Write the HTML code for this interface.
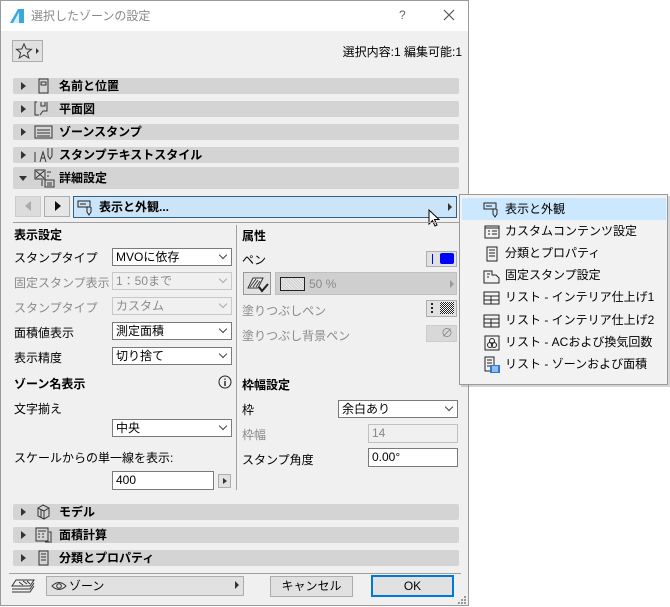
<!DOCTYPE html>
<html><head><meta charset="utf-8"><style>
*{margin:0;padding:0;box-sizing:border-box}
body{width:670px;height:607px;background:#fff;font-family:"Liberation Sans","Noto Sans CJK JP",sans-serif;font-size:12px;color:#000;position:relative;overflow:hidden}
.a{position:absolute}
.dlg{left:0;top:0;width:469px;height:606px;border:1px solid #9a9a9a;background:#f0f0f0}
.title{left:1px;top:1px;width:467px;height:30px;background:#fff}
.bar{position:absolute;left:13px;width:446px;height:16px;background:#d4d4d4;border-radius:2px}
.bar .t{position:absolute;left:8px;top:4px;width:0;height:0;border-left:5px solid #333;border-top:4px solid transparent;border-bottom:4px solid transparent}
.bar .l{position:absolute;left:46px;top:0;font-weight:bold;line-height:16px;font-size:12px}
.bar svg{position:absolute;left:20px;top:0}
.lbl{position:absolute;font-size:12px;line-height:14px}
.dis{color:#8a8a8a}
.b{font-weight:bold}
.sel{position:absolute;background:#fff;border:1px solid #7a7a7a;height:18px;padding-left:3px;line-height:16px;font-size:12px}
.sel.d{background:#f0f0f0;border-color:#c8c8c8;color:#8a8a8a}
.sel .ch{position:absolute;right:5px;top:3px;width:6px;height:6px;border-right:1px solid #444;border-bottom:1px solid #444;transform:rotate(45deg)}
.sel.d .ch{border-color:#aaa}
.inp{position:absolute;background:#fff;border:1px solid #7a7a7a;height:19px;padding-left:3px;line-height:17px}
.btn{position:absolute;background:#e1e1e1;border:1px solid #adadad}
.mi{position:absolute;left:505px;font-size:12px;line-height:14px}
.mic{position:absolute;left:483px}
</style></head><body>
<div class="a dlg"></div>
<div class="a title"></div>
<svg class="a" style="left:9px;top:8px" width="16" height="16"><path d="M1 15 L9 1 L15 1 L15 15Z" fill="#39a7e0"/><path d="M4 15 L10 4 L10 15Z" fill="#fff" opacity=".8"/></svg>
<div class="lbl" style="left:31px;top:9px;color:#888;font-size:12px">選択したゾーンの設定</div>
<div class="lbl" style="left:399px;top:8px;color:#666">?</div>
<svg class="a" style="left:443px;top:9px" width="12" height="12"><path d="M1 1L11 11M11 1L1 11" stroke="#555" stroke-width="1.2"/></svg>

<div class="btn" style="left:12px;top:40px;width:31px;height:22px"></div>
<svg class="a" style="left:15px;top:42px" width="26" height="18"><path d="M9 2 L11.2 7 L16.5 7.3 L12.4 10.7 L13.8 16 L9 13 L4.2 16 L5.6 10.7 L1.5 7.3 L6.8 7Z" fill="none" stroke="#333"/><path d="M21 6 L24 9 L21 12Z" fill="#333"/></svg>
<div class="lbl" style="right:208px;top:45px">選択内容:1 編集可能:1</div>

<div class="bar" style="top:78px"><i class="t"></i><svg width="20" height="16"><rect x="6" y="1" width="9" height="14" fill="none" stroke="#333"/><path d="M8 4h5v3h-5z" fill="none" stroke="#333"/></svg><span class="l">名前と位置</span></div>
<div class="bar" style="top:101px"><i class="t"></i><svg width="22" height="16"><path d="M4 1H2V14H6M8 1v4h4V1M14 1v9h-4l-3 4" fill="none" stroke="#333"/></svg><span class="l">平面図</span></div>
<div class="bar" style="top:124px"><i class="t"></i><svg width="22" height="16"><rect x="2" y="2" width="17" height="12" fill="none" stroke="#333"/><path d="M4 6h13M4 9h13M4 12h13" stroke="#333"/></svg><span class="l">ゾーンスタンプ</span></div>
<div class="bar" style="top:147px"><i class="t"></i><svg width="24" height="16"><path d="M2 5v10M7 15L10 5L13 15M8 11h4M15 1v8l2 3 2-3V1" fill="none" stroke="#333"/></svg><span class="l">スタンプテキストスタイル</span></div>
<div class="bar" style="top:167px;height:22px"><i class="t" style="top:9px;left:6px;border-left:4px solid transparent;border-right:4px solid transparent;border-top:5px solid #333;border-bottom:0"></i><svg width="24" height="22"><rect x="2" y="3" width="10" height="9" fill="none" stroke="#333"/><path d="M3 4l8 7M11 4l-8 7M14 5h4M14 9h2M9 13v6M12 13h9v7h-9z" fill="none" stroke="#333"/><path d="M14 16h5M14 18h5" stroke="#333"/></svg><span class="l" style="line-height:22px">詳細設定</span></div>

<div class="btn" style="left:15px;top:196px;width:26px;height:21px;background:#dcdcdc;border-color:#ccc"></div>
<div class="a" style="left:25px;top:201px;border-right:6px solid #aaa;border-top:5px solid transparent;border-bottom:5px solid transparent"></div>
<div class="btn" style="left:44px;top:196px;width:26px;height:21px;background:#e6e6e6"></div>
<div class="a" style="left:55px;top:201px;border-left:6px solid #111;border-top:5px solid transparent;border-bottom:5px solid transparent"></div>
<div class="a" style="left:73px;top:196px;width:384px;height:22px;background:#cce4f7;border:1px solid #2c628b"></div>
<svg class="a" style="left:77px;top:199px" width="20" height="17"><path d="M1 2h12v6H1zM3 5h6M10 8v5l2 3 2-3V8" fill="none" stroke="#222"/></svg>
<div class="lbl b" style="left:99px;top:200px">表示と外観...</div>
<div class="a" style="left:448px;top:203px;border-left:4px solid #333;border-top:4px solid transparent;border-bottom:4px solid transparent"></div>
<svg class="a" style="left:428px;top:209px" width="14" height="20"><path d="M1 1V15L4.5 11.5L7 17L9 16L6.5 10.5H11Z" fill="#fff" stroke="#000"/></svg>
<div class="a" style="left:13px;top:222px;width:447px;height:1px;background:#a0a0a0"></div>
<div class="a" style="left:236px;top:225px;width:1px;height:265px;background:#a0a0a0"></div>

<div class="lbl b" style="left:14px;top:228px">表示設定</div>
<div class="lbl" style="left:14px;top:251px">スタンプタイプ</div>
<div class="sel" style="left:112px;top:248px;width:120px">MVOに依存<i class="ch"></i></div>
<div class="lbl dis" style="left:14px;top:276px">固定スタンプ表示</div>
<div class="sel d" style="left:112px;top:272px;width:120px">1：50まで<i class="ch"></i></div>
<div class="lbl dis" style="left:14px;top:301px">スタンプタイプ</div>
<div class="sel d" style="left:112px;top:297px;width:120px">カスタム<i class="ch"></i></div>
<div class="lbl" style="left:14px;top:326px">面積値表示</div>
<div class="sel" style="left:112px;top:322px;width:120px">測定面積<i class="ch"></i></div>
<div class="lbl" style="left:14px;top:351px">表示精度</div>
<div class="sel" style="left:112px;top:347px;width:120px">切り捨て<i class="ch"></i></div>
<div class="lbl b" style="left:14px;top:377px">ゾーン名表示</div>
<svg class="a" style="left:218px;top:375px" width="14" height="14"><circle cx="7" cy="7" r="6" fill="none" stroke="#222"/><path d="M7 6v5M7 3.5v1.3" stroke="#222" stroke-width="1.4"/></svg>
<div class="lbl" style="left:14px;top:402px">文字揃え</div>
<div class="sel" style="left:112px;top:419px;width:120px">中央<i class="ch"></i></div>
<div class="lbl" style="left:14px;top:451px">スケールからの単一線を表示:</div>
<div class="inp" style="left:112px;top:471px;width:102px">400</div>
<div class="btn" style="left:218px;top:474px;width:13px;height:14px"></div>
<div class="a" style="left:223px;top:478px;border-left:4px solid #333;border-top:3px solid transparent;border-bottom:3px solid transparent"></div>

<div class="lbl b" style="left:242px;top:229px">属性</div>
<div class="lbl" style="left:242px;top:253px">ペン</div>
<div class="btn" style="left:426px;top:251px;width:31px;height:16px;background:#e1e1e1"></div>
<div class="a" style="left:432px;top:254px;width:1px;height:10px;background:#00f"></div>
<div class="a" style="left:440px;top:253px;width:14px;height:11px;background:#00f;border-radius:2px"></div>
<div class="btn" style="left:243px;top:272px;width:28px;height:23px;background:#e1e1e1;border-color:#999"></div>
<svg class="a" style="left:246px;top:275px" width="24" height="18"><path d="M2 13L7 3H17L12 13Z" fill="#eee" stroke="#333"/><path d="M4 12l6-8M7 12l5-7M10 12l4-6" stroke="#333"/><path d="M13 12l3 4 6-7" fill="none" stroke="#222" stroke-width="2"/></svg>
<div class="a" style="left:275px;top:272px;width:182px;height:23px;background:#cfcfcf;border:1px solid #c0c0c0"></div>
<div class="a" style="left:280px;top:277px;width:25px;height:14px;border:1px solid #222;background:repeating-linear-gradient(45deg,#ccc 0 1px,#eee 1px 2px)"></div>
<div class="lbl dis" style="left:309px;top:277px">50 %</div>
<div class="a" style="left:450px;top:280px;border-left:4px solid #999;border-top:4px solid transparent;border-bottom:4px solid transparent"></div>
<div class="lbl dis" style="left:242px;top:304px">塗りつぶしペン</div>
<div class="btn" style="left:426px;top:300px;width:31px;height:17px;background:#e1e1e1"></div>
<div class="a" style="left:431px;top:303px;width:1px;height:10px;border-left:2px dotted #222"></div>
<div class="a" style="left:440px;top:302px;width:14px;height:12px;background:repeating-conic-gradient(#222 0 25%,#fff 0 50%) 0 0/2px 2px"></div>
<div class="lbl dis" style="left:242px;top:329px">塗りつぶし背景ペン</div>
<div class="btn" style="left:426px;top:325px;width:31px;height:17px;background:#d8d8d8;border-color:#ccc"></div>
<div class="lbl dis" style="left:441px;top:326px">∅</div>
<div class="lbl b" style="left:242px;top:378px">枠幅設定</div>
<div class="lbl" style="left:242px;top:403px">枠</div>
<div class="sel" style="left:338px;top:400px;width:120px">余白あり<i class="ch"></i></div>
<div class="lbl dis" style="left:242px;top:428px">枠幅</div>
<div class="inp" style="left:368px;top:424px;width:90px;background:#f0f0f0;border-color:#c0c0c0;color:#888">14</div>
<div class="lbl" style="left:242px;top:453px">スタンプ角度</div>
<div class="inp" style="left:368px;top:448px;width:90px">0.00°</div>

<div class="bar" style="top:504px"><i class="t"></i><svg width="22" height="16"><path d="M5 4l5-3 6 3v8l-5 3-6-3z M5 4l6 3 5-3 M11 7v8 M8 6v8" fill="none" stroke="#333"/></svg><span class="l">モデル</span></div>
<div class="bar" style="top:527px"><i class="t"></i><svg width="24" height="16"><rect x="3" y="1" width="12" height="13" fill="none" stroke="#333"/><path d="M5 4h8M5 7h2M9 7h2M5 10h2M9 10h2M16 5h2v9M12 15h7" fill="none" stroke="#333"/></svg><span class="l">面積計算</span></div>
<div class="bar" style="top:550px"><i class="t"></i><svg width="20" height="16"><path d="M6 1h9v14H6z M8 4h5M8 7h5M8 10h5" fill="none" stroke="#333"/></svg><span class="l">分類とプロパティ</span></div>
<div class="a" style="left:9px;top:573px;width:452px;height:1px;background:#a0a0a0"></div>

<svg class="a" style="left:11px;top:578px" width="26" height="18"><path d="M5 2h18l-4 6H1z M1 11h18l4-6 M1 14h18l4-6" fill="none" stroke="#333"/><path d="M8 4l4 3M12 3l4 3M16 3l3 3" stroke="#333"/></svg>
<div class="a" style="left:46px;top:576px;width:198px;height:20px;background:#e1e1e1;border:1px solid #adadad"></div>
<svg class="a" style="left:51px;top:580px" width="16" height="12"><path d="M1 6Q8 -1 15 6Q8 13 1 6Z" fill="none" stroke="#333"/><circle cx="8" cy="6" r="2.3" fill="none" stroke="#333"/></svg>
<div class="lbl" style="left:69px;top:579px">ゾーン</div>
<div class="a" style="left:235px;top:581px;border-left:4px solid #333;border-top:4px solid transparent;border-bottom:4px solid transparent"></div>
<div class="btn" style="left:270px;top:576px;width:83px;height:21px;text-align:center;line-height:19px">キャンセル</div>
<div class="btn" style="left:371px;top:575px;width:83px;height:22px;border:2px solid #0078d7;text-align:center;line-height:18px">OK</div>
<svg class="a" style="left:458px;top:596px" width="9" height="9"><g fill="#999"><rect x="6" y="0" width="2" height="2"/><rect x="3" y="3" width="2" height="2"/><rect x="6" y="3" width="2" height="2"/><rect x="0" y="6" width="2" height="2"/><rect x="3" y="6" width="2" height="2"/><rect x="6" y="6" width="2" height="2"/></g></svg>

<div class="a" style="left:461px;top:196px;width:209px;height:191px;background:#888;opacity:.35"></div>
<div class="a" style="left:459px;top:194px;width:209px;height:191px;background:#f2f2f2;border:1px solid #999"></div>
<div class="a" style="left:462px;top:198px;width:204px;height:22px;background:#cce8ff"></div>
<svg class="mic" style="top:201px" width="18" height="17"><path d="M1 2h12v6H1zM3 5h6M10 8v5l2 3 2-3V8" fill="none" stroke="#222"/></svg>
<div class="mi" style="top:202px">表示と外観</div>
<svg class="mic" style="top:224px" width="18" height="16"><rect x="2" y="2" width="14" height="12" fill="none" stroke="#222"/><path d="M2 4h14M5 7h2M9 7h5M5 10h2M9 10h5" stroke="#222"/></svg>
<div class="mi" style="top:224px">カスタムコンテンツ設定</div>
<svg class="mic" style="top:246px" width="18" height="16"><path d="M4 1h10v14H4z M6 4h6M6 7h6M6 10h6" fill="none" stroke="#222"/></svg>
<div class="mi" style="top:246px">分類とプロパティ</div>
<svg class="mic" style="top:268px" width="18" height="16"><path d="M1 3h8v4h4l3 3v5H1z M4 6h3M4 9h2" fill="none" stroke="#222"/></svg>
<div class="mi" style="top:268px">固定スタンプ設定</div>
<svg class="mic" style="top:290px" width="18" height="16"><path d="M1 2h15v12H1z M1 6h15M1 10h15M8 6v8" fill="none" stroke="#222"/></svg>
<div class="mi" style="top:290px">リスト - インテリア仕上げ1</div>
<svg class="mic" style="top:313px" width="18" height="16"><path d="M1 2h15v12H1z M1 6h15M1 10h15M8 6v8" fill="none" stroke="#222"/></svg>
<div class="mi" style="top:313px">リスト - インテリア仕上げ2</div>
<svg class="mic" style="top:335px" width="18" height="16"><rect x="2" y="1" width="14" height="14" fill="none" stroke="#222"/><circle cx="7" cy="10" r="2.5" fill="none" stroke="#222"/><circle cx="11" cy="10" r="2.5" fill="none" stroke="#222"/><circle cx="9" cy="6" r="2.5" fill="none" stroke="#222"/></svg>
<div class="mi" style="top:335px">リスト - ACおよび換気回数</div>
<svg class="mic" style="top:356px" width="18" height="18"><path d="M2 1h9v14H2z M4 4h5M4 7h5M4 10h3" fill="none" stroke="#222"/><rect x="7" y="9" width="10" height="8" fill="#2b7bd6"/><path d="M9 11h6M9 13h6M9 15h6" stroke="#fff"/></svg>
<div class="mi" style="top:357px">リスト - ゾーンおよび面積</div>
</body></html>
